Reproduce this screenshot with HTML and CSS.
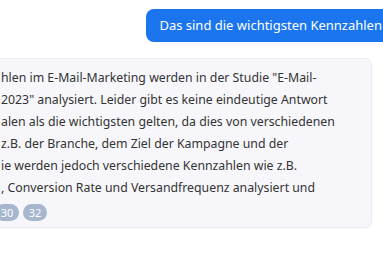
FILE: index.html
```html
<!DOCTYPE html>
<html lang="de">
<head>
<meta charset="utf-8">
<title>Chat</title>
<link rel="stylesheet" href="styles.css">
</head>
<body>
<main class="chat">
  <div class="msg msg-user">Das sind die wichtigsten Kennzahlen</div>
  <div class="msg msg-bot">
    <p class="answer">
      <span class="line">hlen im E-Mail-Marketing werden in der Studie "E-Mail-</span>
      <span class="line">2023" analysiert. Leider gibt es keine eindeutige Antwort</span>
      <span class="line">alen als die wichtigsten gelten, da dies von verschiedenen</span>
      <span class="line">z.B. der Branche, dem Ziel der Kampagne und der</span>
      <span class="line">ie werden jedoch verschiedene Kennzahlen wie z.B.</span>
      <span class="line">, Conversion Rate und Versandfrequenz analysiert und</span>
    </p>
    <div class="sources">
      <span class="badge">30</span>
      <span class="badge">32</span>
    </div>
  </div>
</main>
</body>
</html>
```
FILE: styles.css
```css
html, body {
  margin: 0;
  padding: 0;
  background: #ffffff;
  overflow: hidden;
}

body {
  width: 383px;
  height: 255px;
  font-family: "Segoe UI", "Noto Sans", "Open Sans", sans-serif;
}

.chat {
  display: flex;
  flex-direction: column;
  gap: 16px;
  padding-top: 9px;
  margin: 0 -12px;
}

.msg {
  box-sizing: border-box;
}

.msg-user {
  align-self: flex-end;
  background: #1b75ee;
  color: #ffffff;
  font-size: 13px;
  line-height: 19px;
  padding: 7px 13px;
  border-radius: 8px;
}

.msg-bot {
  margin-right: 23px;
  background: #f7f7fb;
  border: 1px solid #ececf3;
  border-radius: 7px;
  padding: 8px 12px 6px 12px;
  color: #333333;
  box-shadow: 0 1px 2px rgba(0, 0, 0, 0.04);
}

.answer {
  margin: 0;
  font-size: 12.3px;
  line-height: 22px;
}

.line {
  display: block;
  white-space: nowrap;
}

.sources {
  display: flex;
  gap: 4px;
  margin-top: 5px;
  margin-left: -6px;
}

.badge {
  display: inline-flex;
  align-items: center;
  justify-content: center;
  width: 24px;
  height: 17px;
  border-radius: 9px;
  background: #a6b6cd;
  color: #ffffff;
  font-size: 11px;
  line-height: 17px;
}
```
